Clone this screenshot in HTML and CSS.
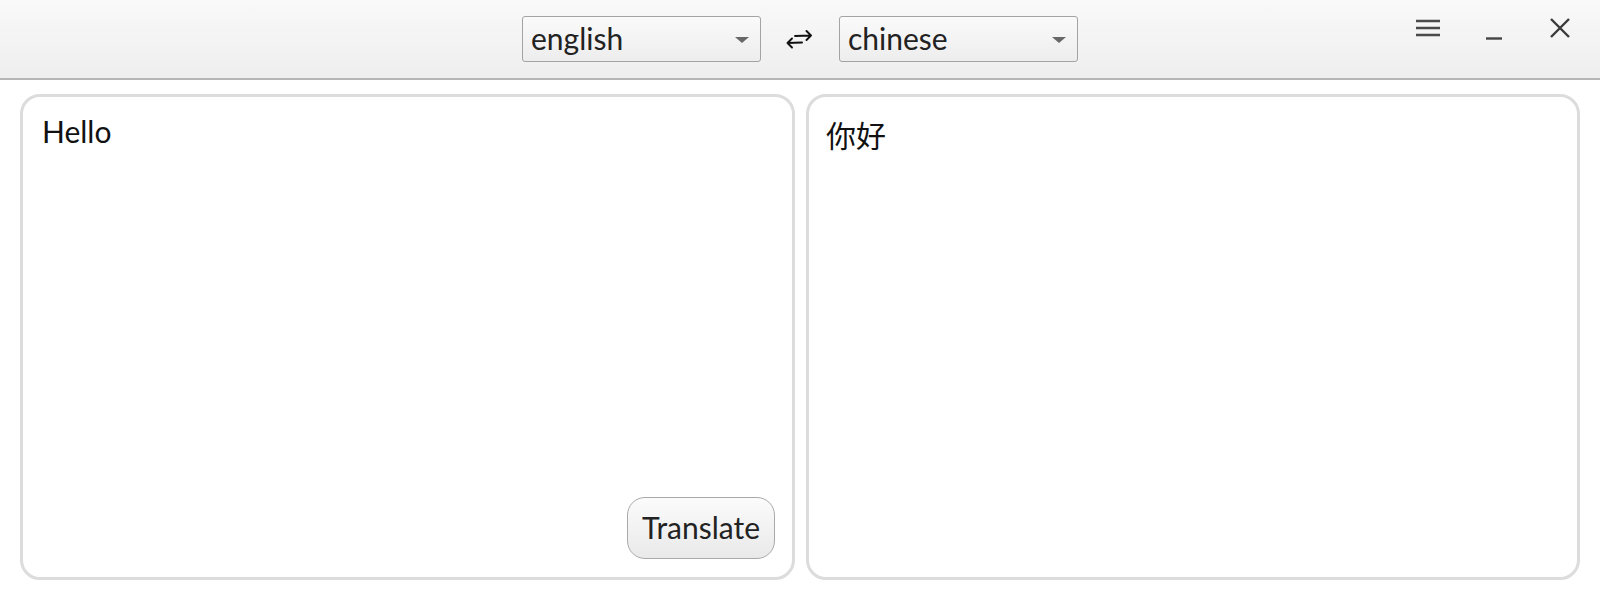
FILE: index.html
```html
<!DOCTYPE html>
<html lang="en">
<head>
<meta charset="utf-8">
<title>Translator</title>
<link rel="stylesheet" href="styles.css">
</head>
<body>
<div class="app">
  <header class="titlebar">
    <div class="spacer"></div>
    <div class="langs">
      <div class="select"><span class="select-text">english</span><span class="caret"></span></div>
      <div class="swap">
        <svg width="26" height="20" viewBox="0 0 26 20" fill="none" stroke="#111" stroke-width="1.9" stroke-linecap="round" stroke-linejoin="round">
          <path d="M9 7 L25 6.5 M20.5 2 L25 6.5 L20.5 11"/>
          <path d="M16 13.5 L1.5 14 M6 9.5 L1.5 14 L6 18.5"/>
        </svg>
      </div>
      <div class="select"><span class="select-text">chinese</span><span class="caret"></span></div>
    </div>
    <div class="controls">
      <div class="ctl">
        <svg width="24" height="24" viewBox="0 0 24 24" stroke="#4a4a4a" stroke-width="2.4"><path d="M0 5H24M0 12H24M0 19H24"/></svg>
      </div>
      <div class="ctl">
        <svg width="24" height="24" viewBox="0 0 24 24" stroke="#444" stroke-width="2.4"><path d="M4 22.5H20"/></svg>
      </div>
      <div class="ctl">
        <svg width="24" height="24" viewBox="0 0 24 24" stroke="#3a3a3a" stroke-width="2.4"><path d="M3 3L21 21M21 3L3 21"/></svg>
      </div>
    </div>
  </header>
  <main class="panes">
    <section class="pane source">
      <div class="pane-text">Hello</div>
      <button class="translate">Translate</button>
    </section>
    <section class="pane target">
      <div class="pane-text cjk">你好</div>
    </section>
  </main>
</div>
</body>
</html>
```
FILE: styles.css
```css
* { box-sizing: border-box; }
html, body { margin: 0; padding: 0; background: #ffffff; }
body {
  font-family: "Lato", "Noto Sans CJK SC", sans-serif;
  color: #111;
  width: 1600px;
  height: 600px;
  overflow: hidden;
}
.app { display: flex; flex-direction: column; height: 600px; }

.titlebar {
  height: 80px;
  flex: none;
  display: grid;
  grid-template-columns: 1fr auto 1fr;
  align-items: center;
  background: linear-gradient(#f9f9f9, #eeeeee);
  border-bottom: 2px solid #b5b5b5;
}
.langs { display: flex; align-items: center; }
.select {
  width: 239px;
  height: 46px;
  border: 1px solid #a3a3a3;
  border-radius: 3px;
  background: linear-gradient(#fafafa, #ededed);
  display: flex;
  align-items: center;
  justify-content: space-between;
  padding: 0 11px 0 8px;
  font-size: 30px;
  line-height: 36px;
  color: #222;
}
.select-text { margin-top: -3px; }
.caret {
  width: 0; height: 0;
  border-left: 7px solid transparent;
  border-right: 7px solid transparent;
  border-top: 6px solid #686868;
  margin-top: 1px;
}
.swap {
  width: 78px;
  display: flex;
  justify-content: center;
  padding-right: 2px;
}
.swap svg { display: block; }

.controls {
  justify-self: end;
  align-self: start;
  display: flex;
  padding-right: 7px;
}
.ctl {
  width: 66px;
  height: 56px;
  display: flex;
  align-items: center;
  justify-content: center;
}
.ctl svg { display: block; }

.panes {
  flex: 1;
  display: grid;
  grid-template-columns: 775px 774px;
  gap: 11px;
  padding: 14px 20px 20px;
}
.pane {
  border: 3px solid #dcdcdc;
  border-radius: 20px;
  background: #fff;
  display: flex;
  flex-direction: column;
  padding: 16px 17px 18px 19px;
}
.pane-text {
  flex: 1;
  font-size: 30px;
  line-height: 36px;
  color: #111;
}
.target .pane-text { padding-top: 4px; margin-left: -2px; }
.translate {
  align-self: flex-end;
  font-family: "Lato", sans-serif;
  font-size: 30px;
  line-height: 36px;
  width: 148px;
  height: 62px;
  padding: 0 0 2px;
  text-align: center;
  border: 1px solid #a9a9a9;
  border-radius: 18px;
  background: linear-gradient(#fbfbfb, #e9e9e9);
  color: #222;
}
```
